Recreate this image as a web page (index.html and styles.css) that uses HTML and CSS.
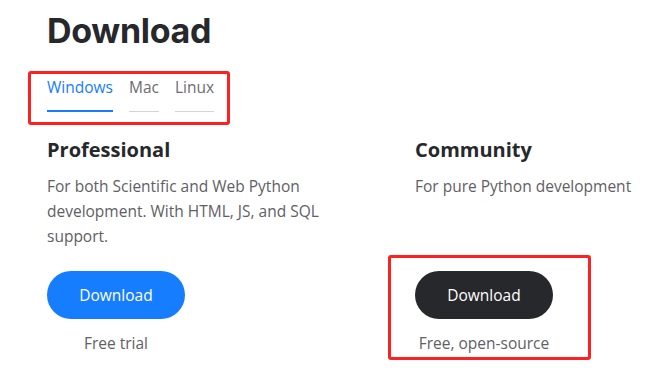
FILE: index.html
```html
<!DOCTYPE html>
<html lang="en">
<head>
<meta charset="utf-8">
<title>Download</title>
<link rel="stylesheet" href="styles.css">
</head>
<body>
<main class="page">
  <h1 class="title">Download</h1>
  <nav class="tabs">
    <span class="tab tab-active">Windows</span>
    <span class="tab">Mac</span>
    <span class="tab">Linux</span>
  </nav>
  <section class="plans">
    <div class="plan">
      <h2 class="plan-name">Professional</h2>
      <p class="plan-desc">For both Scientific and Web Python development. With HTML, JS, and SQL support.</p>
      <div class="cta">
        <a class="btn btn-blue">Download</a>
        <span class="cta-note">Free trial</span>
      </div>
    </div>
    <div class="plan">
      <h2 class="plan-name">Community</h2>
      <p class="plan-desc">For pure Python development</p>
      <div class="cta cta-marked">
        <a class="btn btn-dark">Download</a>
        <span class="cta-note">Free, open-source</span>
      </div>
    </div>
  </section>
</main>
</body>
</html>
```

FILE: styles.css
```css
* { box-sizing: border-box; }
html, body { margin: 0; background: #ffffff; }
body {
  font-family: "Open Sans", "Noto Sans", sans-serif;
  color: #27282c;
  min-height: 100vh;
}
.page {
  padding: 10px 0 30px 47px;
}
.title {
  margin: 0;
  font-family: Inter, "Open Sans", sans-serif;
  font-weight: 700;
  font-size: 34px;
  line-height: 42px;
  letter-spacing: -0.3px;
}
.tabs {
  position: relative;
  display: inline-flex;
  align-items: flex-end;
  gap: 16px;
  margin-top: 24px;
}
.tabs::after {
  content: "";
  position: absolute;
  top: -5px;
  left: -19px;
  right: -16px;
  bottom: -13px;
  border: 3px solid #ff2020;
  border-radius: 3px;
  pointer-events: none;
}
.tab {
  font-size: 15.5px;
  line-height: 22px;
  color: #6b6c70;
  padding-bottom: 13px;
  border-bottom: 1px solid #d4d4d6;
}
.tab-active {
  color: #167dff;
  border-bottom: 2px solid #167dff;
  padding-bottom: 12px;
}
.plans {
  display: grid;
  grid-template-columns: 368px 1fr;
  grid-template-rows: auto auto auto;
  margin-top: 24px;
}
.plan {
  display: grid;
  grid-row: span 3;
  grid-template-rows: subgrid;
  justify-items: start;
}
.plan-name {
  margin: 0;
  font-size: 20px;
  font-weight: 700;
  line-height: 28px;
}
.plan-desc {
  margin: 10px 0 0;
  max-width: 300px;
  font-size: 15.5px;
  line-height: 25px;
  color: #5f6065;
}
.cta {
  position: relative;
  display: inline-flex;
  flex-direction: column;
  align-items: center;
  gap: 13px;
  margin-top: 22px;
}
.cta-marked::after {
  content: "";
  position: absolute;
  top: -16px;
  left: -27px;
  right: -38px;
  bottom: -6px;
  border: 3px solid #ff2020;
  border-radius: 3px;
  pointer-events: none;
}
.btn {
  display: flex;
  align-items: center;
  justify-content: center;
  width: 138px;
  height: 48px;
  border-radius: 24px;
  font-size: 15.5px;
  color: #ffffff;
  text-decoration: none;
}
.btn-blue { background: #167dff; }
.btn-dark { background: #27282c; }
.cta-note {
  font-size: 15.5px;
  line-height: 22px;
  color: #5f6065;
}
```
